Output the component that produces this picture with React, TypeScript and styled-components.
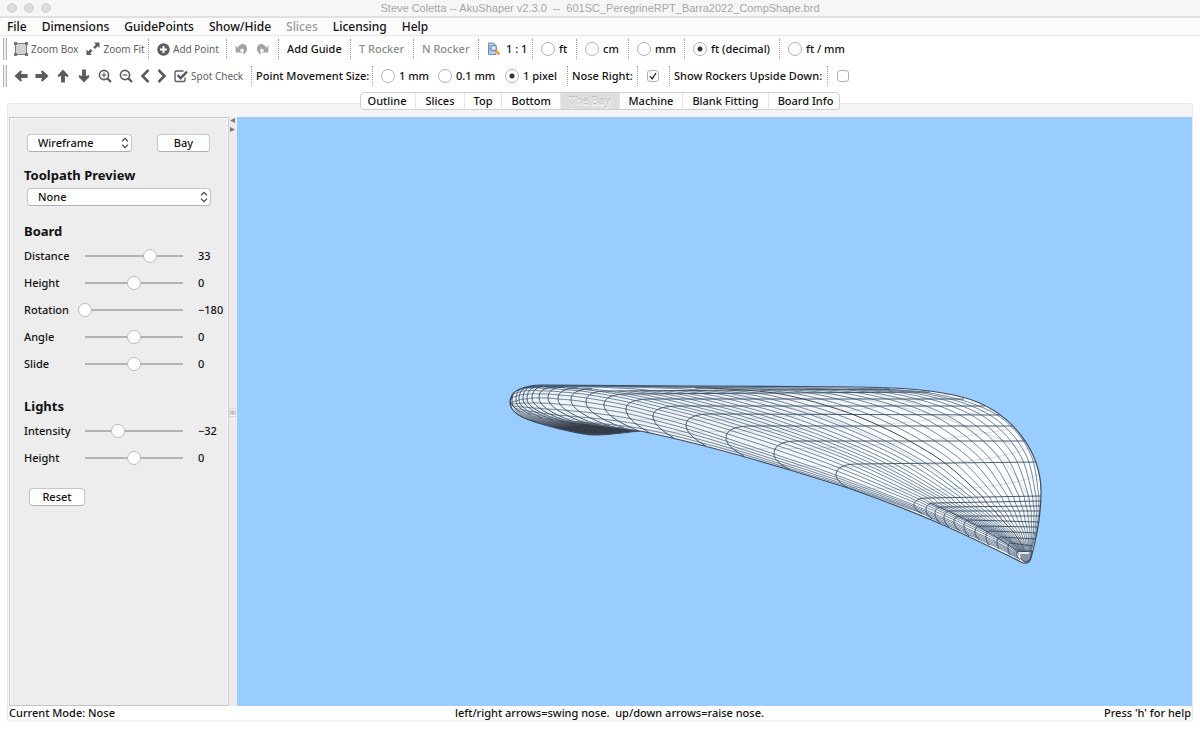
import React, { useId, useState } from 'react';
import styled, { createGlobalStyle } from 'styled-components';

const ui = '"Lucida Grande", "Noto Sans", "Open Sans", sans-serif';

const GlobalStyle = createGlobalStyle`
  * { box-sizing: border-box; }
  body { margin: 0; background: #fff; color: #111; font: 500 11px/14px ${ui}; }
  button, select, input { font: inherit; color: inherit; margin: 0; }
  button { background: none; border: 0; padding: 0; white-space: nowrap; }
`;

const Window = styled.div`
  min-height: 100vh;
  display: flex;
  flex-direction: column;
  padding-bottom: 8px;
`;

const TitleBar = styled.header`
  position: relative;
  height: 18px;
  flex: none;
  display: flex;
  align-items: center;
  justify-content: center;
  background: #f6f6f6;
  border-bottom: 2px solid #e0e0e0;
`;

const Lights = styled.div`
  position: absolute;
  left: 7px;
  top: 3px;
  display: flex;
  gap: 7px;
`;

const Light = styled.span`
  width: 10px;
  height: 10px;
  border-radius: 50%;
  background: #dcdcdc;
  border: 1px solid #d0d0d0;
`;

const Title = styled.h1`
  margin: 0;
  font: 400 11px/14px "Liberation Sans", Arial, sans-serif;
  color: #a6a6a6;
  white-space: pre;
`;

const MenuBar = styled.nav`
  height: 18px;
  flex: none;
  display: flex;
  align-items: center;
  gap: 15px;
  padding-left: 7px;
  background: #fbfbfb;
  border-bottom: 1px solid #e6e6e6;
  font-size: 12px;
`;

const MenuItem = styled.button`
  &:disabled { color: #9a9a9a; }
`;

const ToolBar = styled.div`
  height: 26px;
  flex: none;
  display: flex;
  align-items: center;
  margin: 0 0 1px 3px;
`;

const Handle = styled.span`
  width: 4px;
  height: 22px;
  flex: none;
  border: solid #b4b4b4;
  border-width: 0 1px;
  background: #ececec;
`;

const Group = styled.div<{ $w: number; $pad?: number; $gap?: number; $first?: boolean }>`
  width: ${p => p.$w}px;
  height: 20px;
  flex: none;
  display: flex;
  align-items: center;
  gap: ${p => p.$gap ?? 8}px;
  padding-left: ${p => p.$pad ?? 8}px;
  border-left: 1px ${p => (p.$first ? 'solid transparent' : 'dotted #a2a2a2')};
  white-space: nowrap;
`;

const ToolButton = styled.button`
  display: flex;
  align-items: center;
  gap: 3px;
  color: #5e5e5e;
  font-size: 10px;
  font-weight: 400;
`;

const TextButton = styled.button`
  &:disabled { color: #8c8c8c; }
`;

const Choice = styled.label<{ $w?: number }>`
  display: flex;
  align-items: center;
  gap: 4px;
  ${p => p.$w && `width: ${p.$w}px;`}
`;

const Radio = styled.input`
  appearance: none;
  width: 14px;
  height: 14px;
  flex: none;
  border: 1px solid #b2b2b2;
  border-radius: 50%;
  background: #fff;
  &:checked { background: radial-gradient(circle, #333 0 2px, #fff 3px); }
`;

const CheckWrap = styled.span`
  display: grid;
  > * { grid-area: 1 / 1; place-self: center; }
  svg { pointer-events: none; }
`;

const Check = styled.input`
  appearance: none;
  width: 12px;
  height: 12px;
  border: 1px solid #b0b0b0;
  border-radius: 3px;
  background: #fff;
`;

const TabBar = styled.div`
  position: relative;
  z-index: 1;
  flex: none;
  align-self: center;
  display: flex;
  height: 18px;
  margin: 2px 0 -7px;
  background: #fff;
  border: 1px solid #cfcfcf;
  border-radius: 4px;
  overflow: hidden;
`;

const Tab = styled.button`
  padding: 0 9px;
  border-left: 1px solid #e6e6e6;
  &:first-child { border-left: 0; padding-left: 7px; }
  &:last-child { padding-right: 6px; }
  &[aria-selected='true'] {
    padding: 0 8px;
    background: #dedede;
    color: #e2e2e2;
    text-shadow: 0 -1px 0 #bdbdbd, 0 1px 0 #fafafa;
  }
`;

const Pane = styled.main`
  flex: 1;
  display: flex;
  flex-direction: column;
  margin: 0 7px;
  padding-top: 13px;
  background: linear-gradient(#f4f4f4 15px, #fff 15px);
  border: 1px solid #e9e9e9;
  border-bottom: 2px solid #f2f2f2;
  border-radius: 3px;
`;

const Split = styled.div`
  flex: 1;
  display: flex;
  padding-left: 1px;
`;

const SidePanel = styled.aside`
  width: 220px;
  flex: none;
  padding: 16px 0 0 14px;
  background: #ededed;
  border: 1px solid #c4c4c4;
  border-right-color: #cfcfcf;
  box-shadow: inset 1px 1px #fbfbfb, inset -1px 0 #fbfbfb;
`;

const Divider = styled.div`
  position: relative;
  width: 8px;
  flex: none;
  background: #ececec;
`;

const DividerArrows = styled.svg`
  display: block;
  width: 7px;
  height: 17px;
`;

const Grip = styled.span`
  position: absolute;
  left: 0;
  top: 50%;
  width: 7px;
  height: 9px;
  margin-top: -4px;
  display: grid;
  place-items: center;
  background: #f6f6f6;
  border: 1px solid #d8d8d8;
  &::after {
    content: '';
    width: 5px;
    height: 5px;
    border-radius: 50%;
    background: #c4c4c4;
  }
`;

const Viewport = styled.section`
  flex: 1;
  min-width: 0;
  display: flex;
  background: #99ccff;
`;

const Scene = styled.svg`
  display: block;
  width: 100%;
  min-height: 320px;
`;

const PanelRow = styled.div<{ $top?: number; $left?: number }>`
  display: flex;
  gap: 25px;
  margin-top: ${p => p.$top ?? 0}px;
  padding-left: ${p => p.$left ?? 3}px;
`;

const SelectWrap = styled.span<{ $w: number }>`
  width: ${p => p.$w}px;
  display: grid;
  > * { grid-area: 1 / 1; }
  svg { place-self: center end; margin-right: 3px; pointer-events: none; }
`;

const Select = styled.select`
  appearance: none;
  width: 100%;
  height: 18px;
  padding: 0 10px;
  background: #fff;
  border: 1px solid #c6c6c6;
  border-bottom-color: #b0b0b0;
  border-radius: 4px;
`;

const PushButton = styled.button<{ $w: number }>`
  width: ${p => p.$w}px;
  height: 18px;
  background: #fff;
  border: 1px solid #c6c6c6;
  border-bottom-color: #b0b0b0;
  border-radius: 4px;
`;

const Heading = styled.h2<{ $top: number; $bottom?: number }>`
  margin: ${p => p.$top}px 0 ${p => p.$bottom ?? 2}px;
  font-size: 13px;
  line-height: 18px;
  font-weight: 700;
`;

const SliderRow = styled.div`
  height: 27px;
  display: grid;
  grid-template-columns: 54px 112px 1fr;
  align-items: center;
`;

const Slider = styled.input`
  appearance: none;
  width: 112px;
  height: 14px;
  background: linear-gradient(#b3b3b3, #b3b3b3) center / 98px 2px no-repeat;
  &::-webkit-slider-thumb {
    appearance: none;
    width: 14px;
    height: 14px;
    border: 1px solid #bcbcbc;
    border-radius: 50%;
    background: #fff;
  }
`;

const Value = styled.output`
  padding-left: 8px;
`;

const StatusBar = styled.footer`
  height: 14px;
  flex: none;
  display: flex;
  justify-content: space-between;
  white-space: pre;
  padding: 0 1px;
`;

/* ---------- icons ---------- */

const Arrow = ({ turn }: { turn: number }) => (
  <svg width="14" height="14" viewBox="0 0 16 16" fill="#5c5c5c" aria-hidden>
    <path transform={`rotate(${turn} 8 8)`} d="M.5 8 7 2h2.2L8 5.8h7.5v4.4H8L9.2 14H7Z" />
  </svg>
);

const Magnifier = ({ plus }: { plus?: boolean }) => (
  <svg width="14" height="14" viewBox="0 0 14 14" fill="none" stroke="#5c5c5c" aria-hidden>
    <circle cx="6" cy="6" r="4.6" strokeWidth="1.6" />
    <path d="m9.4 9.4 3.6 3.6" strokeWidth="2.2" />
    <path d={plus ? 'M3.6 6h4.8M6 3.6v4.8' : 'M3.6 6h4.8'} strokeWidth="1.2" />
  </svg>
);

const Chevron = ({ d }: { d: string }) => (
  <svg width="10" height="14" viewBox="0 0 10 14" fill="none" stroke="#5c5c5c" strokeWidth="2.6" aria-hidden>
    <path d={d} />
  </svg>
);

const ZoomBoxIcon = () => (
  <svg width="14" height="14" viewBox="0 0 14 14" aria-hidden>
    <rect x="1.5" y="1.5" width="11" height="11" fill="#d2d2d2" stroke="#7d7d7d" />
    <path d="M0 0h3v3H0zM11 0h3v3h-3zM0 11h3v3H0zM11 11h3v3h-3z" fill="#747474" />
  </svg>
);

const ZoomFitIcon = () => (
  <svg width="14" height="14" viewBox="0 0 14 14" fill="#5c5c5c" aria-hidden>
    <path d="M8 .5H13.500V6L11.700 4.200 9 7 7.200 5.200 9.800 2.400ZM.5 7.500 2.300 9.300 4.600 7 6.400 8.800 4.200 11.200 6 13H.5Z" />
  </svg>
);

const AddPointIcon = () => (
  <svg width="13" height="13" viewBox="0 0 13 13" aria-hidden>
    <circle cx="6.5" cy="6.5" r="6.2" fill="#5c5c5c" />
    <path d="M6.5 3v7M3 6.5h7" stroke="#fff" strokeWidth="2" />
  </svg>
);

const UndoIcon = ({ flip }: { flip?: boolean }) => (
  <svg width="13" height="12" viewBox="0 0 13 12" aria-hidden>
    <g transform={flip ? 'matrix(-1 0 0 1 13 0)' : undefined}>
      <path d="M.6 2.600V9.400H7L4.800 7.300C6.400 5 9 5.200 8.700 8.200L7.600 11.600C12 9.800 13.600 5 10.600 2.200 8 0 4.600 1.200 2.700 4.800Z" fill="#a2a2a2" />
    </g>
  </svg>
);

const ActualSizeIcon = () => (
  <svg width="14" height="14" viewBox="0 0 14 14" aria-hidden>
    <path d="M1.5 1h5l2.5 2.5V12.5h-7.5Z" fill="#bcd3ea" stroke="#6f8fb4" />
    <path d="M1.5 4h2M1.5 7h2M1.5 10h2" stroke="#6f8fb4" />
    <circle cx="6.6" cy="6" r="2.8" fill="#dcebf8" stroke="#5e87b5" strokeWidth="1.1" />
    <path d="m8.8 8.4 3.6 4" stroke="#ee9a3e" strokeWidth="2.6" />
  </svg>
);

const SpotCheckIcon = () => (
  <svg width="14" height="14" viewBox="0 0 14 14" fill="none" stroke="#5c5c5c" aria-hidden>
    <path d="M9.500 2H2.500Q1 2 1 3.500v7.500Q1 12.500 2.500 12.500H9.500Q11 12.500 11 11V8.500" strokeWidth="1.4" />
    <path d="m3.600 6.200 3 3L13 2.600" strokeWidth="2.400" />
  </svg>
);

const UpDown = () => (
  <svg width="8" height="12" viewBox="0 0 8 12" fill="none" stroke="#444" strokeWidth="1.3" aria-hidden>
    <path d="m1 4.400 3-3 3 3M1 7.600l3 3 3-3" />
  </svg>
);

/* ---------- board wireframe ---------- */

type Pt = [number, number];
// Each rib: lower rail point, leftmost point, top of the rail curve, far rail point.
type Rib = [Pt, Pt, Pt, Pt];

const ribs: Rib[] = [
  [[511, 404], [510, 402], [511, 400], [512, 398]],
  [[520, 412], [512, 402], [518, 390], [535, 386]],
  [[531, 415], [516, 401], [524, 388], [560, 385]],
  [[542, 418], [519, 400], [530, 387], [600, 386]],
  [[553, 420], [523, 399], [536, 386], [640, 386]],
  [[564, 422], [527, 399], [541, 386], [680, 387]],
  [[575, 424], [532, 398], [548, 386], [715, 387]],
  [[586, 426], [539, 398], [555, 387], [750, 387]],
  [[597, 427], [548, 398], [565, 387], [785, 388]],
  [[607, 428], [558, 399], [578, 388], [820, 388]],
  [[618, 429], [571, 400], [592, 389], [855, 388]],
  [[629, 430], [586, 402], [607, 391], [890, 389]],
  [[639, 431], [604, 405], [628, 394], [930, 392]],
  [[650, 433], [626, 409], [652, 399], [964, 399]],
  [[674, 438], [653, 416], [680, 406], [985, 406]],
  [[706, 446], [686, 425], [712, 414], [1003, 415]],
  [[744, 456], [726, 438], [752, 426], [1016, 426]],
  [[790, 470], [774, 454], [798, 441], [1028, 441]],
  [[848, 488], [836, 475], [858, 464], [1037, 462]],
  [[922, 514], [914, 505], [928, 498], [1041, 496]],
  [[932, 519], [926, 510], [934, 503], [1041, 501]],
  [[940, 523], [935, 514], [942, 507], [1041, 506]],
  [[949, 527], [944, 518], [951, 511], [1041, 511]],
  [[959, 531], [954, 522], [960, 516], [1040, 516]],
  [[969, 536], [964, 527], [969, 520], [1039, 522]],
  [[979, 540], [975, 532], [980, 526], [1038, 527]],
  [[989, 545], [986, 537], [991, 531], [1037, 533]],
  [[999, 549], [997, 542], [1001, 537], [1035, 539]],
  [[1010, 555], [1008, 548], [1011, 543], [1033, 546]],
  [[1020, 560], [1017, 554], [1019, 551], [1031, 553]],
];

const mix = (a: number, b: number, t: number) => a + (b - a) * t;

// 0..1 sweeps the near rail, 1..2 crosses the deck.
function at([b, a, c, d]: Rib, u: number): Pt {
  if (u >= 1) return [mix(c[0], d[0], u - 1), mix(c[1], d[1], u - 1)];
  if (u < 0.5) {
    const t = u * 2;
    const k: Pt = [a[0], mix(a[1], b[1], 0.45)];
    return [0, 1].map(i => (1 - t) ** 2 * b[i] + 2 * t * (1 - t) * k[i] + t * t * a[i]) as Pt;
  }
  const t = u * 2 - 1;
  const k: Pt = [a[0], c[1]];
  return [0, 1].map(i => (1 - t) ** 2 * a[i] + 2 * t * (1 - t) * k[i] + t * t * c[i]) as Pt;
}

const fmt = (p: Pt) => `${p[0].toFixed(1)} ${p[1].toFixed(1)}`;

function smooth(pts: Pt[]) {
  let d = `M${fmt(pts[0])}`;
  for (let i = 0; i < pts.length - 1; i++) {
    const p0 = pts[Math.max(0, i - 1)];
    const p1 = pts[i];
    const p2 = pts[i + 1];
    const p3 = pts[Math.min(pts.length - 1, i + 2)];
    const dist = (m: Pt, n: Pt) => Math.hypot(m[0] - n[0], m[1] - n[1]) || 1;
    const seg = dist(p1, p2);
    const s1 = seg / (dist(p0, p1) + seg);
    const s2 = seg / (dist(p2, p3) + seg);
    const c1: Pt = [p1[0] + ((p2[0] - p0[0]) * s1) / 3, p1[1] + ((p2[1] - p0[1]) * s1) / 3];
    const c2: Pt = [p2[0] - ((p3[0] - p1[0]) * s2) / 3, p2[1] - ((p3[1] - p1[1]) * s2) / 3];
    d += `C${fmt(c1)} ${fmt(c2)} ${fmt(p2)}`;
  }
  return d;
}

// Near the tail the deck is seen edge-on, so those ribs show only their rail curve.
const EDGE_ON = 11;

const ribPaths = ribs.map(
  (r, n) =>
    'M' + Array.from({ length: 21 }, (_, i) => fmt(at(r, i / 20))).join('L') + (n < EDGE_ON ? '' : `L${fmt(r[3])}`),
);

const railStations = [0.08, 0.18, 0.29, 0.4, 0.5, 0.6, 0.7, 0.8, 0.9];
const deckStations = [
  0, 0.04, 0.08, 0.12, 0.16, 0.2, 0.245, 0.29, 0.335, 0.38, 0.43,
  0.54, 0.595, 0.65, 0.705, 0.755, 0.805, 0.85, 0.89, 0.925, 0.955, 0.98,
].map(u => u + 1);
const stringers = [
  ...railStations.map(u => smooth(ribs.map(r => at(r, u)))),
  ...deckStations.map((u, n) => smooth(ribs.slice(n % 4 ? EDGE_ON : 2).map(r => at(r, u)))),
];
const centreLine = smooth(ribs.slice(9).map(r => at(r, 1.485)));

const hull =
  'M510 402C510 392 520 386 540 385L700 386 860 387C905 388 935 390 962 397C1012 410 1041 452 1041 492C1041 515 1036 540 1031 558Q1029 564 1023 563L1007 555C960 532 920 513 848 488L790 470C740 455 690 441 640 431C620 433 610 435 598 435C580 435 560 429 545 425C520 418 510 412 510 402Z';
const keel = 'M513 408C530 418 560 419 590 423Q620 427 641 431C625 432 610 435 598 435C580 435 560 429 545 425C528 420 518 415 513 408Z';

const undersideLines = [
  'M690 391C800 398 900 440 975 500',
  'M770 390C880 394 960 420 1020 448',
  'M640 432C760 432 900 430 1000 408',
  'M720 448C840 452 950 440 1017 428',
  'M780 465C880 470 990 466 1034 446',
  'M850 487C930 492 1010 490 1038 474',
  'M610 418C720 425 860 415 950 394',
  'M850 390C940 400 1000 440 1030 500',
];

const Board = () => (
  <Scene viewBox="237 117 955 589" role="img" aria-label="Wireframe of the board">
    <defs>
      <linearGradient id="deck" x1="0" y1="0" x2="1" y2="0.3">
        <stop offset="0" stopColor="#eef3f7" />
        <stop offset="0.5" stopColor="#f0f4f8" />
        <stop offset="0.75" stopColor="#fbfdff" />
      </linearGradient>
      <linearGradient id="keel" x1="0" y1="0" x2="0.5" y2="1">
        <stop offset="0" stopColor="#56697f" stopOpacity="0.4" />
        <stop offset="0.75" stopColor="#333c47" />
      </linearGradient>
      <clipPath id="hull"><path d={hull} /></clipPath>
    </defs>
    <path d={hull} fill="url(#deck)" />
    <g fill="none" clipPath="url(#hull)">
      {undersideLines.map(d => <path key={d} d={d} stroke="#cdd3d8" strokeWidth="0.8" />)}
      {stringers.map(d => <path key={d} d={d} stroke="#48617e" strokeWidth="0.75" />)}
      {ribPaths.map(d => <path key={d} d={d} stroke="#34495f" strokeWidth="0.9" />)}
      <path d={centreLine} stroke="#333" strokeWidth="0.9" />
      <path d="M930 503Q980 524 1019 552" stroke="#3d5066" strokeWidth="1" />
    </g>
    <path d={keel} fill="url(#keel)" />
    <path d="M520 411C560 419 600 422 632 428M530 414C560 421 600 425 636 430" fill="none" stroke="#8496a8" strokeWidth="0.6" />
    <path d={hull} fill="none" stroke="#3c4c60" strokeWidth="1.2" strokeLinejoin="round" />
    <path d="M1018 552 1032 551Q1031 562 1025 562 1020 560 1018 552Z" fill="#8496a6" stroke="#3a4654" />
    <path d="M1020 558 1019 553H1029" fill="none" stroke="#fff" strokeWidth="1.400" />
  </Scene>
);

/* ---------- parts ---------- */

function SliderField({ label, min = -100, max = 100, start }: { label: string; min?: number; max?: number; start: number }) {
  const id = useId();
  const [value, setValue] = useState(start);
  return (
    <SliderRow>
      <label htmlFor={id}>{label}</label>
      <Slider id={id} type="range" min={min} max={max} value={value} onChange={e => setValue(+e.target.value)} />
      <Value htmlFor={id}>{String(value).replace('-', '−')}</Value>
    </SliderRow>
  );
}

function Tick({ id, start }: { id: string; start: boolean }) {
  const [on, setOn] = useState(start);
  return (
    <CheckWrap>
      <Check id={id} type="checkbox" checked={on} onChange={() => setOn(!on)} />
      {on && (
        <svg width="8" height="8" viewBox="0 0 8 8" fill="none" stroke="#222" strokeWidth="1.3" aria-hidden>
          <path d="M1 4.200 3.200 6.800 7 1" />
        </svg>
      )}
    </CheckWrap>
  );
}

const menus = ['File', 'Dimensions', 'GuidePoints', 'Show/Hide', 'Slices', 'Licensing', 'Help'];
const tabs = ['Outline', 'Slices', 'Top', 'Bottom', 'The Bay', 'Machine', 'Blank Fitting', 'Board Info'];
const units: [string, number][] = [['ft', 44], ['cm', 52], ['mm', 56], ['ft (decimal)', 95], ['ft / mm', 80]];
const steps: [string, number][] = [['1 mm', 52], ['0.1 mm', 62], ['1 pixel', 60]];

export default function App() {
  const [tab, setTab] = useState('The Bay');
  return (
    <>
      <GlobalStyle />
      <Window>
        <TitleBar>
          <Lights><Light /><Light /><Light /></Lights>
          <Title>Steve Coletta -- AkuShaper v2.3.0  --  601SC_PeregrineRPT_Barra2022_CompShape.brd</Title>
        </TitleBar>
        <MenuBar>
          {menus.map(m => <MenuItem key={m} disabled={m === 'Slices'}>{m}</MenuItem>)}
        </MenuBar>
        <ToolBar>
          <Handle />
          <Group $w={141} $pad={6} $first>
            <ToolButton><ZoomBoxIcon />Zoom Box</ToolButton>
            <ToolButton><ZoomFitIcon />Zoom Fit</ToolButton>
          </Group>
          <Group $w={78}><ToolButton><AddPointIcon />Add Point</ToolButton></Group>
          <Group $w={52}>
            <ToolButton aria-label="Undo"><UndoIcon /></ToolButton>
            <ToolButton aria-label="Redo"><UndoIcon flip /></ToolButton>
          </Group>
          <Group $w={72}><TextButton>Add Guide</TextButton></Group>
          <Group $w={63}><TextButton disabled>T Rocker</TextButton></Group>
          <Group $w={65}><TextButton disabled>N Rocker</TextButton></Group>
          <Group $w={54} $gap={5}><ActualSizeIcon /><TextButton>1 : 1</TextButton></Group>
          {units.map(([u, w]) => (
            <Group key={u} $w={w}>
              <Choice><Radio type="radio" name="unit" defaultChecked={u === 'ft (decimal)'} />{u}</Choice>
            </Group>
          ))}
        </ToolBar>
        <ToolBar>
          <Handle />
          <Group $w={244} $pad={6} $gap={7} $first>
            {[['left', 0], ['right', 180], ['up', 90], ['down', 270]].map(([n, t]) => (
              <ToolButton key={n} aria-label={`Move ${n}`}><Arrow turn={t as number} /></ToolButton>
            ))}
            <ToolButton aria-label="Zoom in"><Magnifier plus /></ToolButton>
            <ToolButton aria-label="Zoom out"><Magnifier /></ToolButton>
            <ToolButton aria-label="Previous"><Chevron d="M8.500 1 2.500 7l6 6" /></ToolButton>
            <ToolButton aria-label="Next"><Chevron d="M1.500 1 7.500 7l-6 6" /></ToolButton>
            <ToolButton><SpotCheckIcon />Spot Check</ToolButton>
          </Group>
          <Group $w={121} $pad={4}>Point Movement Size:</Group>
          <Group $w={195} $gap={5}>
            {steps.map(([s, w]) => (
              <Choice key={s} $w={w}><Radio type="radio" name="step" defaultChecked={s === '1 pixel'} />{s}</Choice>
            ))}
          </Group>
          <Group $w={70} $pad={4}><label htmlFor="nose">Nose Right:</label></Group>
          <Group $w={32} $pad={9}><Tick id="nose" start /></Group>
          <Group $w={158} $pad={4}><label htmlFor="rockers">Show Rockers Upside Down:</label></Group>
          <Group $w={32} $pad={9}><Tick id="rockers" start={false} /></Group>
        </ToolBar>
        <TabBar role="tablist">
          {tabs.map(t => (
            <Tab key={t} role="tab" aria-selected={t === tab} onClick={() => setTab(t)}>{t}</Tab>
          ))}
        </TabBar>
        <Pane>
          <Split>
            <SidePanel>
              <PanelRow>
                <SelectWrap $w={105}>
                  <Select aria-label="Render mode"><option>Wireframe</option></Select>
                  <UpDown />
                </SelectWrap>
                <PushButton $w={53}>Bay</PushButton>
              </PanelRow>
              <Heading $top={14} $bottom={4}>Toolpath Preview</Heading>
              <PanelRow>
                <SelectWrap $w={184}>
                  <Select aria-label="Toolpath preview"><option>None</option></Select>
                  <UpDown />
                </SelectWrap>
              </PanelRow>
              <Heading $top={16}>Board</Heading>
              <SliderField label="Distance" start={33} />
              <SliderField label="Height" start={0} />
              <SliderField label="Rotation" min={-180} max={180} start={-180} />
              <SliderField label="Angle" start={0} />
              <SliderField label="Slide" start={0} />
              <Heading $top={20}>Lights</Heading>
              <SliderField label="Intensity" start={-32} />
              <SliderField label="Height" start={0} />
              <PanelRow $top={17} $left={5}><PushButton $w={56}>Reset</PushButton></PanelRow>
            </SidePanel>
            <Divider>
              <DividerArrows viewBox="0 0 7 17" fill="#7a7a7a" aria-hidden>
                <path d="M6 1v5L1 3.500ZM1 10v5l5-2.500Z" />
              </DividerArrows>
              <Grip />
            </Divider>
            <Viewport><Board /></Viewport>
          </Split>
          <StatusBar>
            <span>Current Mode: Nose</span>
            <span>left/right arrows=swing nose.  up/down arrows=raise nose.</span>
            <span>Press 'h' for help</span>
          </StatusBar>
        </Pane>
      </Window>
    </>
  );
}
